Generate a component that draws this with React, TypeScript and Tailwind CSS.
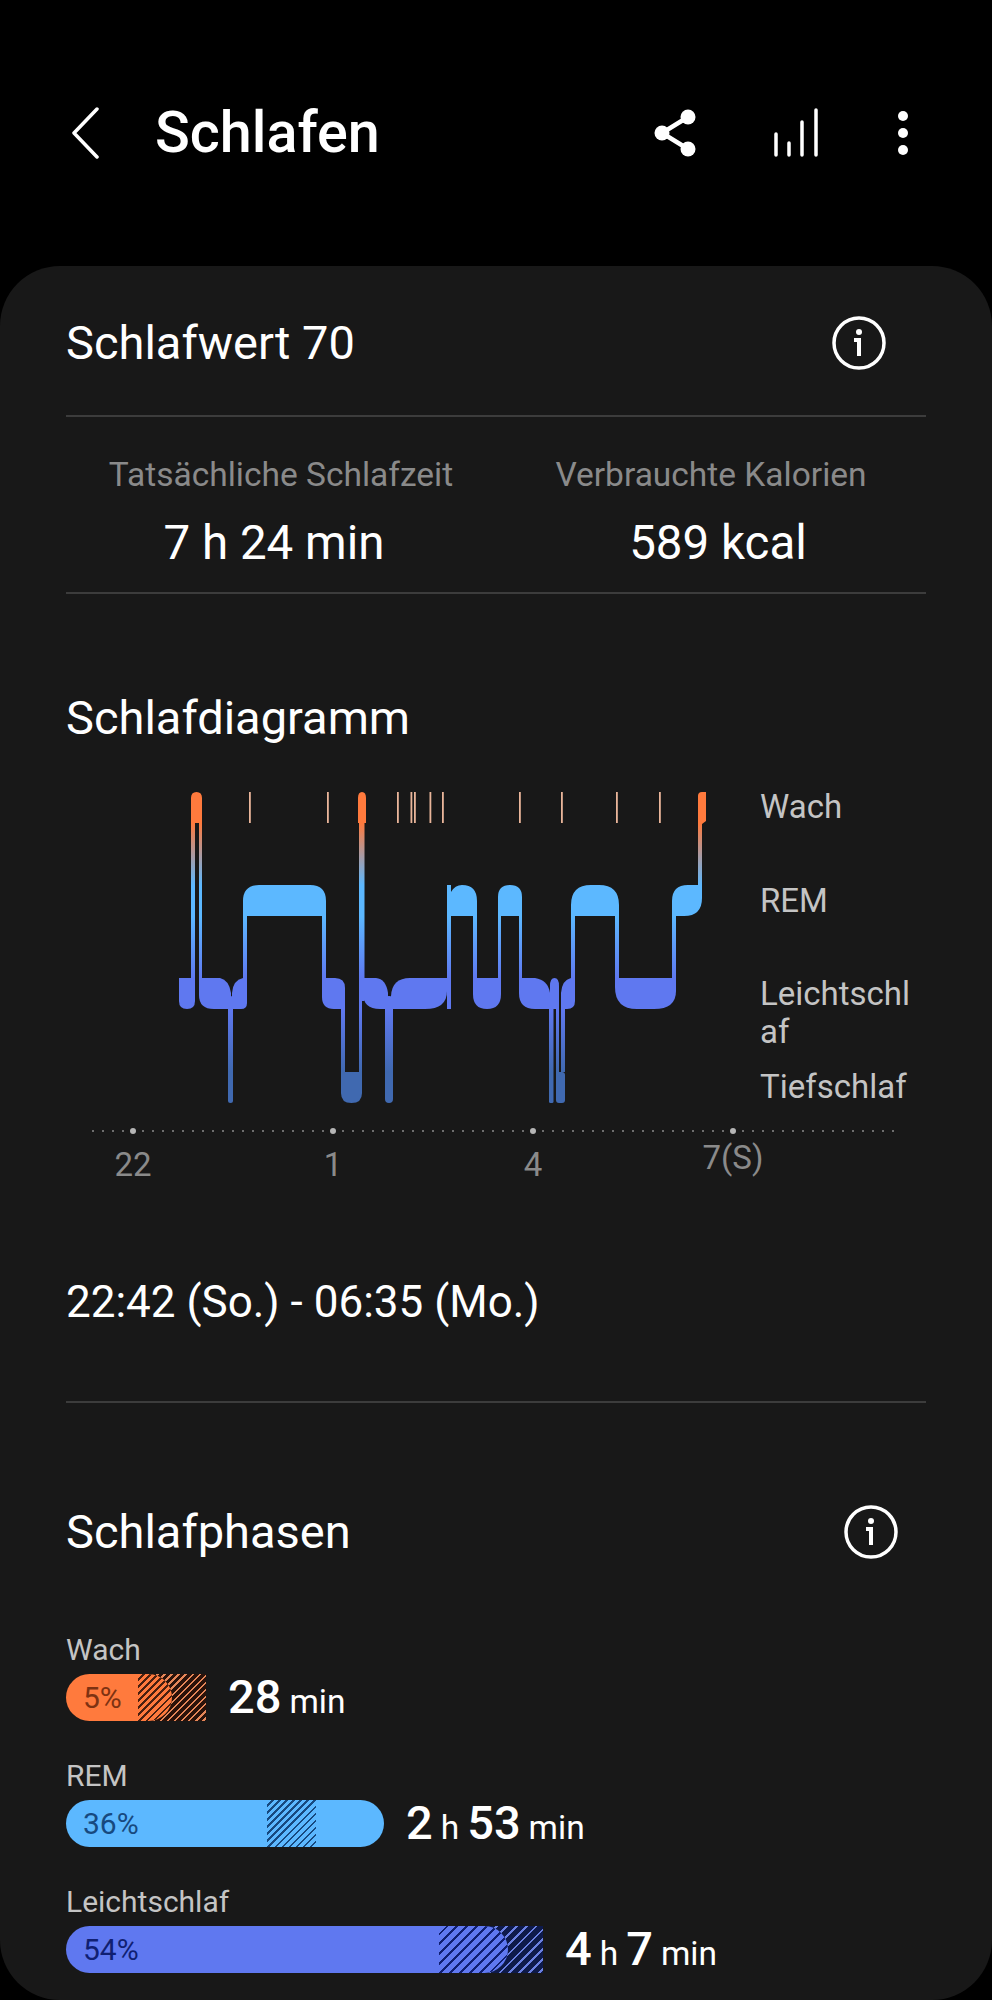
import React from 'react';

const WAKE_TICKS = [249, 327, 397, 410.5, 414, 429.5, 442, 519, 561, 616, 659];

const STAGE_PATHS = [
  'M179 977H195V1000Q195 1008 187 1008Q179 1008 179 1000Z',
  'M191 797Q191 791 196.5 791Q202 791 202 797V977H199V822H195V977H191Z',
  'M199 977H220Q229 979 231 992V1008H214Q199 1008 199 994Z',
  'M232 992Q233 979 243 977H247V1002Q247 1008 241 1008H232Z',
  'M243 977V900Q243 884 259 884H310Q326 884 326 900V977H322V915H247V977Z',
  'M322 977H335Q345 977 345 987V1071H341V1008H334Q322 1008 322 996Z',
  'M341 1071H362V1092Q362 1102 351.5 1102Q341 1102 341 1092Z',
  'M358 797Q358 791 362 791Q366 791 366 797V822H364.5V1000H362V1075H359V822H358Z',
  'M363 977H376Q386 978 388 992V1008H380Q363 1008 363 992Z',
  'M391 995Q392 977 410 977H447V990Q447 1008 425 1008H391Z',
  'M451 891Q455 884 462 884Q477 884 477 900V977H473V915H451Z',
  'M473 977H501V993Q501 1008 487 1008Q473 1008 473 993Z',
  'M498 977V896Q498 884 510 884Q522 884 522 896V977H519V915H501V977Z',
  'M519 977H535Q548 979 550 992V1008H535Q519 1008 519 992Z',
  'M550 985Q550 977 554.5 977Q559 977 559 985V1008H550Z',
  'M561 992Q562 979 571 977H575V1000Q575 1008 567 1008H565V1071H561Z',
  'M571 977V904Q571 884 591 884H599Q619 884 619 904V977H615V915H575V977Z',
  'M615 977H676V990Q676 1008 654 1008H637Q615 1008 615 986Z',
  'M672 977V900Q672 884 688 884H698V795Q698 791 702 791H706V820L702 823V897Q702 915 684 915H676V977Z',
];

const InfoIcon = () => (
  <svg width="54" height="54" viewBox="0 0 54 54" fill="none" stroke="white">
    <circle cx="27" cy="27" r="25" strokeWidth="3.5" />
    <circle cx="27" cy="16" r="3" fill="white" stroke="none" />
    <path d="M22 24H27V40" strokeWidth="4" />
  </svg>
);

const SleepChart = () => (
  <svg width="674" height="330" viewBox="66 780 674 330" className="shrink-0">
    <defs>
      <linearGradient id="stage" gradientUnits="userSpaceOnUse" x1="0" y1="791" x2="0" y2="1102">
        <stop offset="0.1" stopColor="#ff7a3d" />
        <stop offset="0.3" stopColor="#5cb8ff" />
        <stop offset="0.4" stopColor="#5cb8ff" />
        <stop offset="0.6" stopColor="#5f78f0" />
        <stop offset="0.7" stopColor="#5f78f0" />
        <stop offset="0.9" stopColor="#4069b0" />
      </linearGradient>
    </defs>
    {WAKE_TICKS.map((x) => (
      <rect key={x} x={x} y="791" width="1.8" height="31" fill="#e9b59a" />
    ))}
    <g fill="url(#stage)">
      {STAGE_PATHS.map((d) => (
        <path key={d} d={d} />
      ))}
      <rect x="228" y="995" width="5" height="107" rx="2.5" />
      <rect x="385" y="995" width="8" height="107" rx="4" />
      <rect x="447" y="884" width="4" height="124" />
      <rect x="549" y="1000" width="4.5" height="102" rx="1.5" />
      <rect x="556" y="1000" width="3" height="75" />
      <rect x="556" y="1071" width="9" height="31" rx="3" />
    </g>
  </svg>
);

const Num = ({ children }: { children: React.ReactNode }) => (
  <span className="text-[47px] font-medium">{children}</span>
);
const Unit = ({ children }: { children: React.ReactNode }) => (
  <span className="text-[33.5px] mx-[8px]">{children}</span>
);

const App: React.FC = () => {
  return (
    <div className="w-[992px] h-[2000px] overflow-hidden bg-black text-white font-['Roboto',sans-serif]">
      <header className="h-[266px] pt-[108px]">
        <div className="h-[50px] flex items-center relative">
          <svg width="30" height="52" viewBox="0 0 30 52" fill="none" stroke="white" strokeWidth="3.5" strokeLinecap="round" strokeLinejoin="round" className="ml-[71px]">
            <path d="M26 2L3 26L26 50" />
          </svg>
          <h1 className="ml-[54px] text-[57.5px] font-medium leading-none">Schlafen</h1>
          <svg width="46" height="50" viewBox="0 0 46 50" fill="white" stroke="white" className="ml-auto">
            <path d="M35 9L9 25L35 41" strokeWidth="4.5" fill="none" />
            <circle cx="35" cy="9" r="7.5" stroke="none" />
            <circle cx="9" cy="25" r="7.5" stroke="none" />
            <circle cx="35" cy="41" r="7.5" stroke="none" />
          </svg>
          <svg width="46" height="50" viewBox="0 0 46 50" fill="none" stroke="white" strokeWidth="3.5" strokeLinecap="round" className="ml-[73px]">
            <path d="M4 47V26M17 47V35M30 47V14M44 47V2" />
          </svg>
          <svg width="14" height="48" viewBox="0 0 14 48" fill="white" className="ml-[78px] mr-[82px]">
            <circle cx="7" cy="7" r="5" />
            <circle cx="7" cy="24" r="5" />
            <circle cx="7" cy="41" r="5" />
          </svg>
        </div>
      </header>

      <main className="h-[1734px] bg-[#181818] rounded-[60px] px-[66px]">
        <div className="h-[151px] pt-[5px] flex items-center justify-between border-b-2 border-[#3c3c3c]">
          <span className="text-[47px]">Schlafwert 70</span>
          <span className="mr-[40px]"><InfoIcon /></span>
        </div>

        <div className="h-[177px] grid grid-cols-2 border-b-2 border-[#3c3c3c] text-center pt-[39px]">
          <div>
            <p className="text-[33.5px] leading-[38px] text-[#8a8a8a]">Tatsächliche Schlafzeit</p>
            <p className="mt-[19px] pr-[14px] text-[47.5px] leading-[60px]">7 h 24 min</p>
          </div>
          <div>
            <p className="text-[33.5px] leading-[38px] text-[#8a8a8a]">Verbrauchte Kalorien</p>
            <p className="mt-[19px] pl-[14px] text-[47.5px] leading-[60px]">589 kcal</p>
          </div>
        </div>

        <h2 className="mt-[96px] text-[47px] leading-[56px]">Schlafdiagramm</h2>

        <div className="mt-[35px] flex">
          <SleepChart />
          <div className="ml-[20px] w-[155px] text-[33px] leading-[38px] text-[#c4c4c4] break-all">
            <p className="mt-[7px]">Wach</p>
            <p className="mt-[56px]">REM</p>
            <p className="mt-[55px]">Leichtschlaf</p>
            <p className="mt-[17px]">Tiefschlaf</p>
          </div>
        </div>

        <div className="mt-[17px] ml-[26px] w-[808px] h-[6px] -translate-x-[4px] bg-[radial-gradient(circle,#6e6e6e_1px,transparent_1.4px)] bg-[length:10px_6px]">
          <div className="-ml-[55px] flex">
            {[0, 1, 2, 3].map((i) => (
              <div key={i} className="w-[200px] flex justify-center">
                <span className="w-[6px] h-[6px] rounded-full bg-[#b5b5b5]" />
              </div>
            ))}
          </div>
        </div>

        <div className="-ml-[33px] mt-[12px] flex text-[33px] leading-[38px] text-[#8a8a8a]">
          <span className="w-[200px] text-center">22</span>
          <span className="w-[200px] text-center">1</span>
          <span className="w-[200px] text-center">4</span>
          <span className="w-[200px] text-center -mt-[7px]">7(S)</span>
        </div>

        <div className="mt-[90px] pb-[71px] border-b-2 border-[#3c3c3c]">
          <p className="text-[44px] leading-[56px]">22:42 (So.) - 06:35 (Mo.)</p>
        </div>

        <div className="mt-[102px] h-[54px] flex items-center justify-between">
          <span className="text-[47px]">Schlafphasen</span>
          <span className="mr-[28px]"><InfoIcon /></span>
        </div>

        {/* Wach */}
        <p className="mt-[74px] text-[30px] leading-[34px] text-[#c4c4c4]">Wach</p>
        <div className="mt-[7px] h-[47px] flex items-center">
          <div className="relative w-[140px] h-[47px]">
            <div className="absolute left-[72px] top-0 w-[68px] h-[47px] bg-[repeating-linear-gradient(135deg,#2a120a_0_3.2px,#e58658_3.2px_5px)]" />
            <div className="relative w-[106px] h-[47px] rounded-full bg-[#ff7a3d] overflow-hidden flex items-center">
              <div className="absolute left-[72px] top-0 w-[34px] h-[47px] bg-[repeating-linear-gradient(135deg,transparent_0_3.2px,#4a2010_3.2px_5px)]" />
              <span className="ml-[17px] text-[30px] text-[#7d3212]">5%</span>
            </div>
          </div>
          <div className="ml-[22px] flex items-baseline"><Num>28</Num><Unit>min</Unit></div>
        </div>

        {/* REM */}
        <p className="mt-[38px] text-[30px] leading-[34px] text-[#c4c4c4]">REM</p>
        <div className="mt-[7px] h-[47px] flex items-center">
          <div className="relative w-[318px] h-[47px] rounded-full bg-[#5cb8ff] overflow-hidden flex items-center">
            <div className="absolute left-[201px] top-0 w-[49px] h-[47px] bg-[repeating-linear-gradient(135deg,transparent_0_3.2px,#17497f_3.2px_5px)]" />
            <span className="ml-[17px] text-[30px] text-[#17497f]">36%</span>
          </div>
          <div className="ml-[22px] flex items-baseline"><Num>2</Num><Unit>h</Unit><Num>53</Num><Unit>min</Unit></div>
        </div>

        {/* Leichtschlaf */}
        <p className="mt-[38px] text-[30px] leading-[34px] text-[#c4c4c4]">Leichtschlaf</p>
        <div className="mt-[7px] h-[47px] flex items-center">
          <div className="relative w-[477px] h-[47px]">
            <div className="absolute left-[373px] top-0 w-[104px] h-[47px] bg-[repeating-linear-gradient(135deg,#0e1a4a_0_5px,#6a7fe0_5px_7px)]" />
            <div className="relative w-[442px] h-[47px] rounded-full bg-[#5f78f0] overflow-hidden flex items-center">
              <div className="absolute left-[373px] top-0 w-[69px] h-[47px] bg-[repeating-linear-gradient(135deg,transparent_0_5px,#101f72_5px_7px)]" />
              <span className="ml-[17px] text-[30px] text-[#101f72]">54%</span>
            </div>
          </div>
          <div className="ml-[22px] flex items-baseline"><Num>4</Num><Unit>h</Unit><Num>7</Num><Unit>min</Unit></div>
        </div>
      </main>
    </div>
  );
};

export default App;
